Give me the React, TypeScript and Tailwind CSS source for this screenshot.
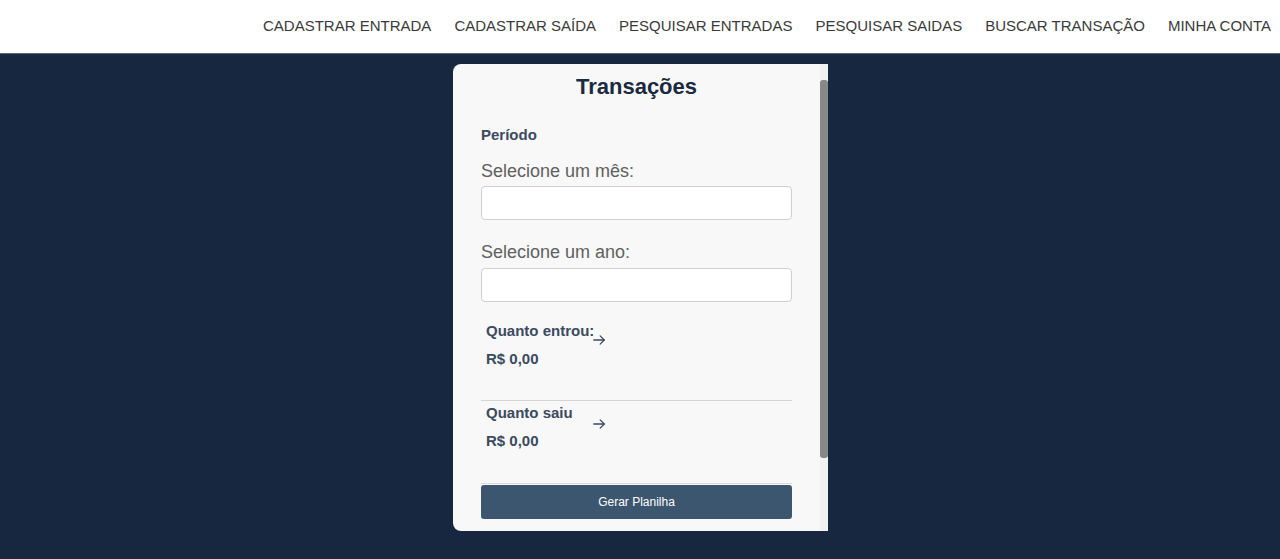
import React from 'react';

const NAV = [
  'CADASTRAR ENTRADA',
  'CADASTRAR SAÍDA',
  'PESQUISAR ENTRADAS',
  'PESQUISAR SAIDAS',
  'BUSCAR TRANSAÇÃO',
  'MINHA CONTA',
];

const Arrow = () => (
  <svg width="14" height="14" viewBox="0 0 24 24" fill="none" stroke="#3b4b61" strokeWidth="2.2" strokeLinecap="round" strokeLinejoin="round">
    <path d="M3 12h18" />
    <path d="m14 5 7 7-7 7" />
  </svg>
);

const Summary = ({ label, arrowOffset }: { label: string; arrowOffset: string }) => (
  <div className="flex pl-[5px]">
    <div className="w-[106px] flex flex-col gap-[8px] whitespace-nowrap">
      <span className="text-[15px] leading-[20px] font-bold text-[#3b4a60]">{label}</span>
      <span className="text-[15px] leading-[20px] font-bold text-[#3b4a60]">R$ 0,00</span>
    </div>
    <div className={arrowOffset}>
      <Arrow />
    </div>
  </div>
);

const App: React.FC = () => {
  return (
    <div className="min-h-screen h-[559px] bg-[#182740] font-['Liberation_Sans',Arial,sans-serif]">
      {/* Top nav */}
      <header className="h-[54px] bg-white border-b border-[#5d6777] flex items-center justify-end pr-[9px] gap-[23px]">
        {NAV.map((item) => (
          <a key={item} className="text-[15px] text-[#3a3a3a] cursor-pointer">
            {item}
          </a>
        ))}
      </header>

      {/* Card */}
      <div className="flex justify-center pt-[10px]">
        <div className="w-[375px] h-[467px] flex bg-[#f8f8f8] rounded-l-[8px] overflow-hidden ml-[1px]">
          <div className="w-[367px] px-[28px] flex flex-col">
            <h2 className="h-[44px] flex items-center justify-center text-[22px] font-bold text-[#1b2a41]">
              Transações
            </h2>
            <span className="mt-[17px] text-[15px] leading-[20px] font-bold text-[#3b4a60]">Período</span>

            <label className="mt-[15px] text-[18px] leading-[22px] text-[#606060]">Selecione um mês:</label>
            <input className="mt-[4px] h-[34px] w-full bg-white border border-[#d0d0d0] rounded-[4px]" />

            <label className="mt-[21px] text-[18px] leading-[22px] text-[#606060]">Selecione um ano:</label>
            <input className="mt-[5px] h-[34px] w-full bg-white border border-[#d0d0d0] rounded-[4px]" />

            <div className="mt-[19px]">
              <Summary label="Quanto entrou:" arrowOffset="pt-[12px]" />
            </div>

            <div className="mt-[31px] border-t border-[#d4d4d4]" />
            <div className="mt-[2px]">
              <Summary label="Quanto saiu" arrowOffset="pt-[14px]" />
            </div>

            <div className="mt-[32px] border-t border-[#dcdcdc]" />
            <button className="mt-[1px] h-[34px] w-full bg-[#3d5670] text-white text-[12px] rounded-[3px]">
              Gerar Planilha
            </button>
          </div>
          {/* scrollbar */}
          <div className="w-[8px] bg-[#f1f1f1] flex flex-col">
            <div className="mt-[16px] h-[378px] bg-[#888888] rounded-[3px]" />
          </div>
        </div>
      </div>
    </div>
  );
};

export default App;
